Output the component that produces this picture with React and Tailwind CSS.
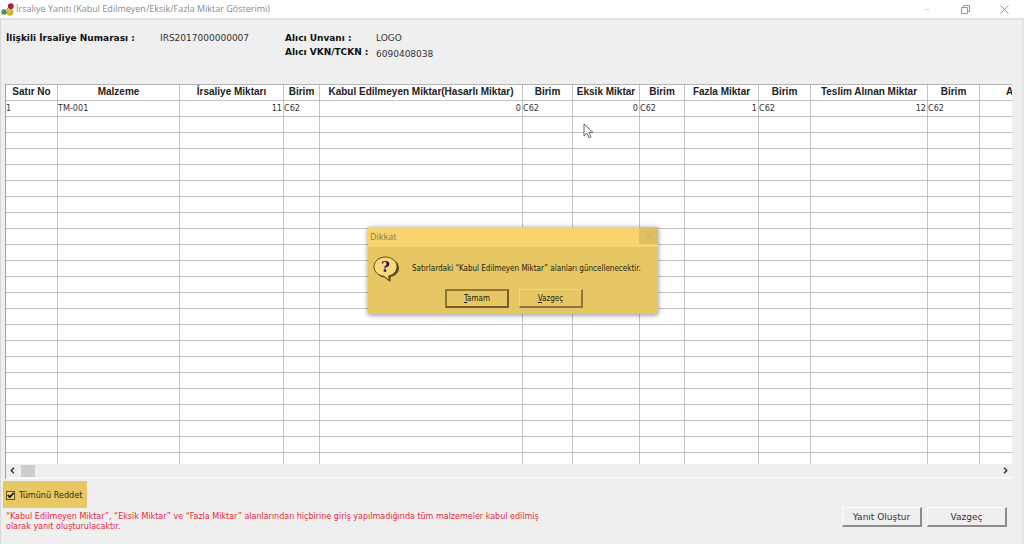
import React from "react";

const columns = [
  { title: "Satır No", width: "w-[52px]", value: "1" },
  { title: "Malzeme", width: "w-[122px]", value: "TM-001" },
  { title: "İrsaliye Miktarı", width: "w-[104px]", value: "11", numeric: true },
  { title: "Birim", width: "w-[36px]", value: "C62" },
  { title: "Kabul Edilmeyen Miktar(Hasarlı Miktar)", width: "w-[203px]", value: "0", numeric: true },
  { title: "Birim", width: "w-[50px]", value: "C62" },
  { title: "Eksik Miktar", width: "w-[67px]", value: "0", numeric: true },
  { title: "Birim", width: "w-[45px]", value: "C62" },
  { title: "Fazla Miktar", width: "w-[74px]", value: "1", numeric: true },
  { title: "Birim", width: "w-[52px]", value: "C62" },
  { title: "Teslim Alınan Miktar", width: "w-[117px]", value: "12", numeric: true },
  { title: "Birim", width: "w-[52px]", value: "C62" },
  { title: "A", width: "w-[62px]", value: "" },
];

const emptyRows = Array.from({ length: 22 }, (_, i) => i);

function AppIcon() {
  return (
    <svg width="13" height="13" viewBox="0 0 13 13" aria-hidden="true">
      <path d="M3 9 9 3M3 9v1h6" stroke="#8a8a60" strokeWidth="1" fill="none" />
      <circle cx="3" cy="9" r="2.7" fill="#3c9140" />
      <circle cx="9.8" cy="3.2" r="2.9" fill="#b51f3c" />
      <circle cx="9" cy="9.3" r="3.4" fill="#c9b529" />
      <circle cx="8.4" cy="8.4" r="1" fill="#eee07c" />
      <circle cx="2.5" cy="8.3" r=".7" fill="#8bca85" />
    </svg>
  );
}

function TitleBar() {
  return (
    <header className="flex h-[18px] items-center bg-white pl-px pr-[15px]">
      <AppIcon />
      <h1 className="ml-[2px] flex-1 whitespace-nowrap font-['Open_Sans',sans-serif] text-[9px] leading-[18px] text-[#8c8c8c]">
        İrsaliye Yanıtı (Kabul Edilmeyen/Eksik/Fazla Miktar Gösterimi)
      </h1>
      <div className="flex items-center gap-[30px] text-[#999]">
        <button type="button" aria-label="Simge durumuna küçült">
          <svg width="8" height="9" viewBox="0 0 8 9"><path d="M1 4.5h6" stroke="#ddd" /></svg>
        </button>
        <button type="button" aria-label="Önceki boyut">
          <svg width="9" height="9" viewBox="0 0 9 9" fill="none" stroke="currentColor">
            <path d="M.5 2.5h6v6h-6zM2.500 2.500v-2h6v6h-2" />
          </svg>
        </button>
        <button type="button" aria-label="Kapat">
          <svg width="9" height="9" viewBox="0 0 9 9" stroke="currentColor">
            <path d="m.5.5 8 8m0-8-8 8" />
          </svg>
        </button>
      </div>
    </header>
  );
}

function Info() {
  return (
    <section className="flex h-[64px] items-start pl-[6px] pt-[11px] text-[9px] leading-[14px] text-[#333]">
      <dl className="flex">
        <dt className="w-[154px] whitespace-nowrap font-bold text-[#111]">İlişkili İrsaliye Numarası :</dt>
        <dd className="w-[125px]">IRS2017000000007</dd>
      </dl>
      <dl className="grid grid-cols-[91px_auto]">
        <dt className="whitespace-nowrap font-bold text-[#111]">Alıcı Unvanı :</dt>
        <dd>LOGO</dd>
        <dt className="whitespace-nowrap font-bold text-[#111]">Alıcı VKN/TCKN :</dt>
        <dd className="pt-[2px]">6090408038</dd>
      </dl>
    </section>
  );
}

function Grid() {
  return (
    <div className="ml-[5px] mr-[12px] border-l border-[#a0a0a0]">
      <div className="h-[380px] overflow-hidden border-t border-[#b4b4b4] bg-white">
        <table className="w-[1036px] table-fixed border-separate border-spacing-0 font-['DejaVu_Sans_Condensed','DejaVu_Sans',sans-serif]">
          <thead>
            <tr className="h-4 font-['Liberation_Sans',sans-serif] text-[10px] leading-[13px] text-[#222]">
              {columns.map((c, i) => (
                <th
                  key={i}
                  className={`${c.width} whitespace-nowrap border-b border-r border-[#c4c4c4] p-0 align-top font-bold ${
                    i === columns.length - 1 ? "pl-[26px] text-left" : "text-center"
                  }`}
                >
                  {c.title}
                </th>
              ))}
            </tr>
          </thead>
          <tbody>
            <tr className="h-4 text-[9px] leading-[15px] text-[#333]">
              {columns.map((c, i) => (
                <td
                  key={i}
                  className={`border-b border-r border-[#c4c4c4] p-0 ${c.numeric ? "pr-px text-right" : "text-left"}`}
                >
                  {c.value}
                </td>
              ))}
            </tr>
            {emptyRows.map((r) => (
              <tr key={r} className="h-4">
                {columns.map((c, i) => (
                  <td key={i} className="border-b border-r border-[#c4c4c4] p-0" />
                ))}
              </tr>
            ))}
          </tbody>
        </table>
      </div>
      <div className="flex h-[15px] items-center justify-between border-b-2 border-[#f8f8f8] px-[4px] text-[#333]">
        <div className="flex items-center gap-[6px]">
          <button type="button" aria-label="Sola kaydır">
            <svg width="5" height="7" viewBox="0 0 5 7" fill="none" stroke="currentColor" strokeWidth="1.4"><path d="M4 .7 1.200 3.500 4 6.300" /></svg>
          </button>
          <div className="h-[12px] w-[14px] bg-[#cdcdcd]" />
        </div>
        <button type="button" aria-label="Sağa kaydır">
          <svg width="5" height="7" viewBox="0 0 5 7" fill="none" stroke="currentColor" strokeWidth="1.4"><path d="M1 .7 3.800 3.500 1 6.300" /></svg>
        </button>
      </div>
    </div>
  );
}

function Footer() {
  const button =
    "h-[20px] w-[80px] border-b-2 border-r-2 border-l border-t border-b-[#8c8c8c] border-r-[#8c8c8c] border-l-[#fafafa] border-t-[#fafafa] text-center text-[9px] leading-[16px] text-[#333]";
  return (
    <footer className="flex items-start justify-between pl-[3px] pr-[17px] pt-[2px]">
      <div>
        <label className="flex h-[27px] w-[84px] items-center gap-1 bg-[#e8c864] pl-[3px] pt-[2px] font-['DejaVu_Sans_Condensed','DejaVu_Sans',sans-serif] text-[9px] text-[#332a12]">
          <span className="grid">
            <input
              type="checkbox"
              defaultChecked
              className="peer col-start-1 row-start-1 size-[9px] appearance-none border border-[#5e4f25] bg-[#f0d47a]"
            />
            <svg className="invisible col-start-1 row-start-1 peer-checked:visible" width="9" height="9" viewBox="0 0 9 9" fill="none" stroke="#1d1606" strokeWidth="1.800">
              <path d="M1.800 4 3.800 6.200 7.600 2" />
            </svg>
          </span>
          <span className="whitespace-nowrap">Tümünü Reddet</span>
        </label>
        <p className="ml-[3px] mt-[4px] max-w-[540px] text-[8px] leading-[10px] text-[#e8283c]">
          “Kabul Edilmeyen Miktar”, “Eksik Miktar” ve “Fazla Miktar” alanlarından hiçbirine giriş yapılmadığında tüm malzemeler kabul edilmiş
          <br />
          olarak yanıt oluşturulacaktır.
        </p>
      </div>
      <div className="mt-[26px] flex gap-[5px]">
        <button type="button" className={button}>Yanıt Oluştur</button>
        <button type="button" className={button}>Vazgeç</button>
      </div>
    </footer>
  );
}

function QuestionIcon() {
  return (
    <svg className="shrink-0" width="27" height="27" viewBox="0 0 27 27" aria-hidden="true">
      <path d="M14 2.500c7 0 12 4 12 9.500 0 4.500-3.500 8-8.500 9v5l-6-4.500C6 21 3 17 3 12.500Z" fill="#5b4a20" />
      <path d="M12.500 1C18.800 1 24 5.200 24 10.600c0 4.600-3.500 8.300-8.300 9.400l.3 4.500-4.800-4.200C5.400 19.900 1 15.900 1 10.600 1 5.200 6.200 1 12.500 1Z" fill="#f9d977" stroke="#5b4a20" />
      <text x="12.500" y="16" textAnchor="middle" className="fill-[#17126b] font-['DejaVu_Serif',serif] text-[15px] font-bold">?</text>
    </svg>
  );
}

function Dialog() {
  const button = "h-[19px] w-[64px] text-center text-[8px] leading-[15px]";
  return (
    <div className="absolute inset-x-0 top-[227px] flex justify-center pl-[2px]">
      <div
        role="dialog"
        aria-labelledby="dialog-title"
        className="w-[290px] bg-[#e7c764] pb-[6px] font-['DejaVu_Sans_Condensed','DejaVu_Sans',sans-serif] text-[#241d0a] shadow-[0_1px_5px_rgba(0,0,0,0.45)]"
      >
        <div className="flex h-[20px] items-start justify-between bg-[#f7d46f] pl-[2px]">
          <h2 id="dialog-title" className="font-['Open_Sans',sans-serif] text-[9px] leading-[19px] text-[#8d7a44]">Dikkat</h2>
          <button type="button" aria-label="Kapat" className="grid h-[17px] w-[19px] place-items-center bg-[#dfbf62]">
            <svg width="7" height="7" viewBox="0 0 7 7" stroke="#cdaf59"><path d="m.5.5 6 6m0-6-6 6" /></svg>
          </button>
        </div>
        <div className="flex h-[42px] items-center gap-[12px] pl-[5px] pt-[2px]">
          <QuestionIcon />
          <p className="whitespace-nowrap text-[8px]">Satırlardaki “Kabul Edilmeyen Miktar” alanları güncellenecektir.</p>
        </div>
        <div className="flex justify-center gap-[10px] pl-[2px]">
          <button type="button" className={`${button} border-2 border-b-[#705d2b] border-l-[#8d773b] border-r-[#705d2b] border-t-[#8d773b]`}>
            <u>T</u>amam
          </button>
          <button type="button" className={`${button} border-b-2 border-l border-r-2 border-t border-b-[#8d773b] border-l-[#f3d67e] border-r-[#8d773b] border-t-[#f3d67e]`}>
            <u>V</u>azgeç
          </button>
        </div>
      </div>
    </div>
  );
}

function Pointer() {
  return (
    <svg className="pointer-events-none absolute left-[583px] top-[123px]" width="11" height="16" viewBox="0 0 11 16" aria-hidden="true">
      <path d="M1 1v12l3-2.800L6 14.800l2-.9-2-4.400h4Z" fill="#fff" stroke="#555" strokeWidth=".9" />
    </svg>
  );
}

export default function App() {
  return (
    <div className="relative flex min-h-screen flex-col overflow-hidden bg-[#efefef] font-['DejaVu_Sans',sans-serif]">
      <TitleBar />
      <main className="flex-1 border-l border-r-2 border-t-2 border-l-[#d8d8d8] border-r-[#e6e6e6] border-t-[#e2e2e2]">
        <div className="-ml-px -mr-0.5">
          <Info />
          <Grid />
          <Footer />
        </div>
      </main>
      <Pointer />
      <Dialog />
    </div>
  );
}
